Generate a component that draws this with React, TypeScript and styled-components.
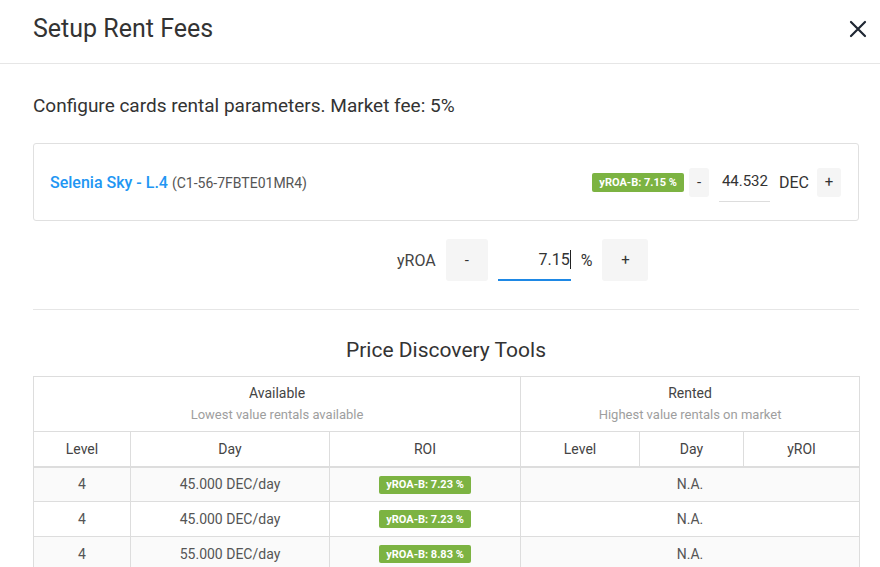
import React from "react";
import styled, { createGlobalStyle } from "styled-components";

const GlobalStyle = createGlobalStyle`
  html, body {
    margin: 0;
    padding: 0;
    background: #fff;
    font-family: Roboto, "Liberation Sans", sans-serif;
    color: #333;
  }
  * { box-sizing: border-box; }
`;

const Modal = styled.div`
  width: 880px;
  height: 567px;
  overflow: hidden;
  background: #fff;
`;

const Header = styled.header`
  display: flex;
  align-items: center;
  justify-content: space-between;
  height: 64px;
  padding: 0 9px 6px 33px;
  border-bottom: 1px solid #e6e6e6;
`;

const Title = styled.h1`
  margin: 0;
  font-size: 25px;
  font-weight: 400;
  color: #333;
`;

const CloseButton = styled.button`
  width: 26px;
  height: 26px;
  padding: 0;
  border: none;
  background: transparent;
  display: flex;
  align-items: center;
  justify-content: center;
  cursor: pointer;
`;

const Body = styled.div`
  padding: 28px 21px 0 33px;
`;

const Intro = styled.p`
  margin: 0;
  font-size: 19px;
  line-height: 27px;
  color: #333;
`;

const CardBox = styled.div`
  margin-top: 24px;
  height: 78px;
  border: 1px solid #e0e0e0;
  border-radius: 3px;
  display: flex;
  align-items: center;
  justify-content: space-between;
  padding: 0 17px 0 16px;
`;

const CardName = styled.div`
  font-size: 16px;
  font-weight: 500;
  color: #2196f3;
  span {
    font-size: 14px;
    font-weight: 400;
    color: #555;
    margin-left: 4px;
  }
`;

const Controls = styled.div`
  display: flex;
  align-items: center;
  gap: 8px;
`;

const Badge = styled.span<{ $tall?: number }>`
  display: inline-flex;
  align-items: center;
  height: ${(p) => p.$tall ?? 19}px;
  padding: 0 7px;
  border-radius: 2px;
  background: #7cb342;
  color: #fff;
  font-size: 11px;
  font-weight: 700;
  white-space: nowrap;
`;

const StepButton = styled.button<{ $w: number; $h: number; $ml?: number }>`
  width: ${(p) => p.$w}px;
  height: ${(p) => p.$h}px;
  margin-left: ${(p) => p.$ml ?? 0}px;
  border: none;
  border-radius: 3px;
  background: #f5f5f5;
  color: #333;
  font-family: inherit;
  font-size: 15px;
  padding: 0;
  display: flex;
  align-items: center;
  justify-content: center;
`;

const SmallInput = styled.div`
  width: 51px;
  height: 34px;
  margin: 5px 1px 0 2px;
  padding-top: 2px;
  padding-right: 2px;
  border-bottom: 1px solid #ddd;
  font-size: 15px;
  text-align: right;
  color: #333;
  line-height: 22px;
`;

const Unit = styled.span`
  font-size: 16px;
  color: #333;
`;

const RoaRow = styled.div`
  margin-top: 18px;
  margin-left: 364px;
  display: flex;
  align-items: center;
  gap: 10px;
`;

const RoaLabel = styled.span`
  font-size: 16px;
  color: #444;
`;

const RoaInput = styled.div`
  width: 73px;
  height: 42px;
  border-bottom: 2px solid #1e88e5;
  display: flex;
  align-items: center;
  justify-content: flex-end;
  font-size: 16px;
  color: #333;
`;

const Caret = styled.i`
  display: inline-block;
  width: 1px;
  height: 19px;
  background: #222;
`;

const Divider = styled.hr`
  margin: 28px 0 0;
  border: none;
  border-top: 1px solid #e6e6e6;
`;

const SectionTitle = styled.h2`
  margin: 25px 0 11px;
  font-size: 21px;
  font-weight: 400;
  line-height: 30px;
  text-align: center;
  color: #333;
`;

const Table = styled.table`
  width: 100%;
  border-collapse: collapse;
  table-layout: fixed;
  font-size: 14px;
  color: #444;
`;

const GroupHead = styled.th`
  height: 55px;
  padding-top: 1px;
  border: 1px solid #ddd;
  font-weight: 400;
  font-size: 14px;
  color: #444;
  line-height: 22px;
  small {
    display: block;
    font-size: 13px;
    color: #9e9e9e;
  }
`;

const ColHead = styled.th`
  height: 35px;
  border: 1px solid #ddd;
  border-bottom: 2px solid #ddd;
  font-weight: 400;
  font-size: 14px;
  color: #444;
`;

const Row = styled.tr`
  &:nth-child(odd) {
    background: #fafafa;
  }
`;

const Cell = styled.td`
  height: 35px;
  border: 1px solid #ddd;
  text-align: center;
  font-size: 14px;
  color: #555;
`;

const rows = [
  { level: 4, day: "45.000 DEC/day", roi: "7.23" },
  { level: 4, day: "45.000 DEC/day", roi: "7.23" },
  { level: 4, day: "55.000 DEC/day", roi: "8.83" },
];

export default function App() {
  return (
    <>
      <GlobalStyle />
      <Modal>
        <Header>
          <Title>Setup Rent Fees</Title>
          <CloseButton aria-label="close">
            <svg width="18" height="18" viewBox="0 0 18 18">
              <path d="M2 2 L16 16 M16 2 L2 16" stroke="#1f2733" strokeWidth="2.2" strokeLinecap="round" />
            </svg>
          </CloseButton>
        </Header>

        <Body>
          <Intro>Configure cards rental parameters. Market fee: 5%</Intro>

          <CardBox>
            <CardName>
              Selenia Sky - L.4<span>(C1-56-7FBTE01MR4)</span>
            </CardName>
            <Controls>
              <Badge>yROA-B: 7.15 %</Badge>
              <StepButton $w={20} $h={29} $ml={-3}>-</StepButton>
              <SmallInput>44.532</SmallInput>
              <Unit>DEC</Unit>
              <StepButton $w={24} $h={29}>+</StepButton>
            </Controls>
          </CardBox>

          <RoaRow>
            <RoaLabel>yROA</RoaLabel>
            <StepButton $w={42} $h={42}>-</StepButton>
            <RoaInput>
              7.15
              <Caret />
            </RoaInput>
            <Unit>%</Unit>
            <StepButton $w={46} $h={42}>+</StepButton>
          </RoaRow>

          <Divider />

          <SectionTitle>Price Discovery Tools</SectionTitle>

          <Table>
            <colgroup>
              <col style={{ width: 97 }} />
              <col style={{ width: 199 }} />
              <col style={{ width: 191 }} />
              <col style={{ width: 119 }} />
              <col style={{ width: 104 }} />
              <col style={{ width: 116 }} />
            </colgroup>
            <thead>
              <tr>
                <GroupHead colSpan={3}>
                  Available
                  <small>Lowest value rentals available</small>
                </GroupHead>
                <GroupHead colSpan={3}>
                  Rented
                  <small>Highest value rentals on market</small>
                </GroupHead>
              </tr>
              <tr>
                <ColHead>Level</ColHead>
                <ColHead>Day</ColHead>
                <ColHead>ROI</ColHead>
                <ColHead>Level</ColHead>
                <ColHead>Day</ColHead>
                <ColHead>yROI</ColHead>
              </tr>
            </thead>
            <tbody>
              {rows.map((r, i) => (
                <Row key={i}>
                  <Cell>{r.level}</Cell>
                  <Cell>{r.day}</Cell>
                  <Cell>
                    <Badge $tall={18}>yROA-B: {r.roi} %</Badge>
                  </Cell>
                  <Cell colSpan={3}>N.A.</Cell>
                </Row>
              ))}
            </tbody>
          </Table>
        </Body>
      </Modal>
    </>
  );
}
